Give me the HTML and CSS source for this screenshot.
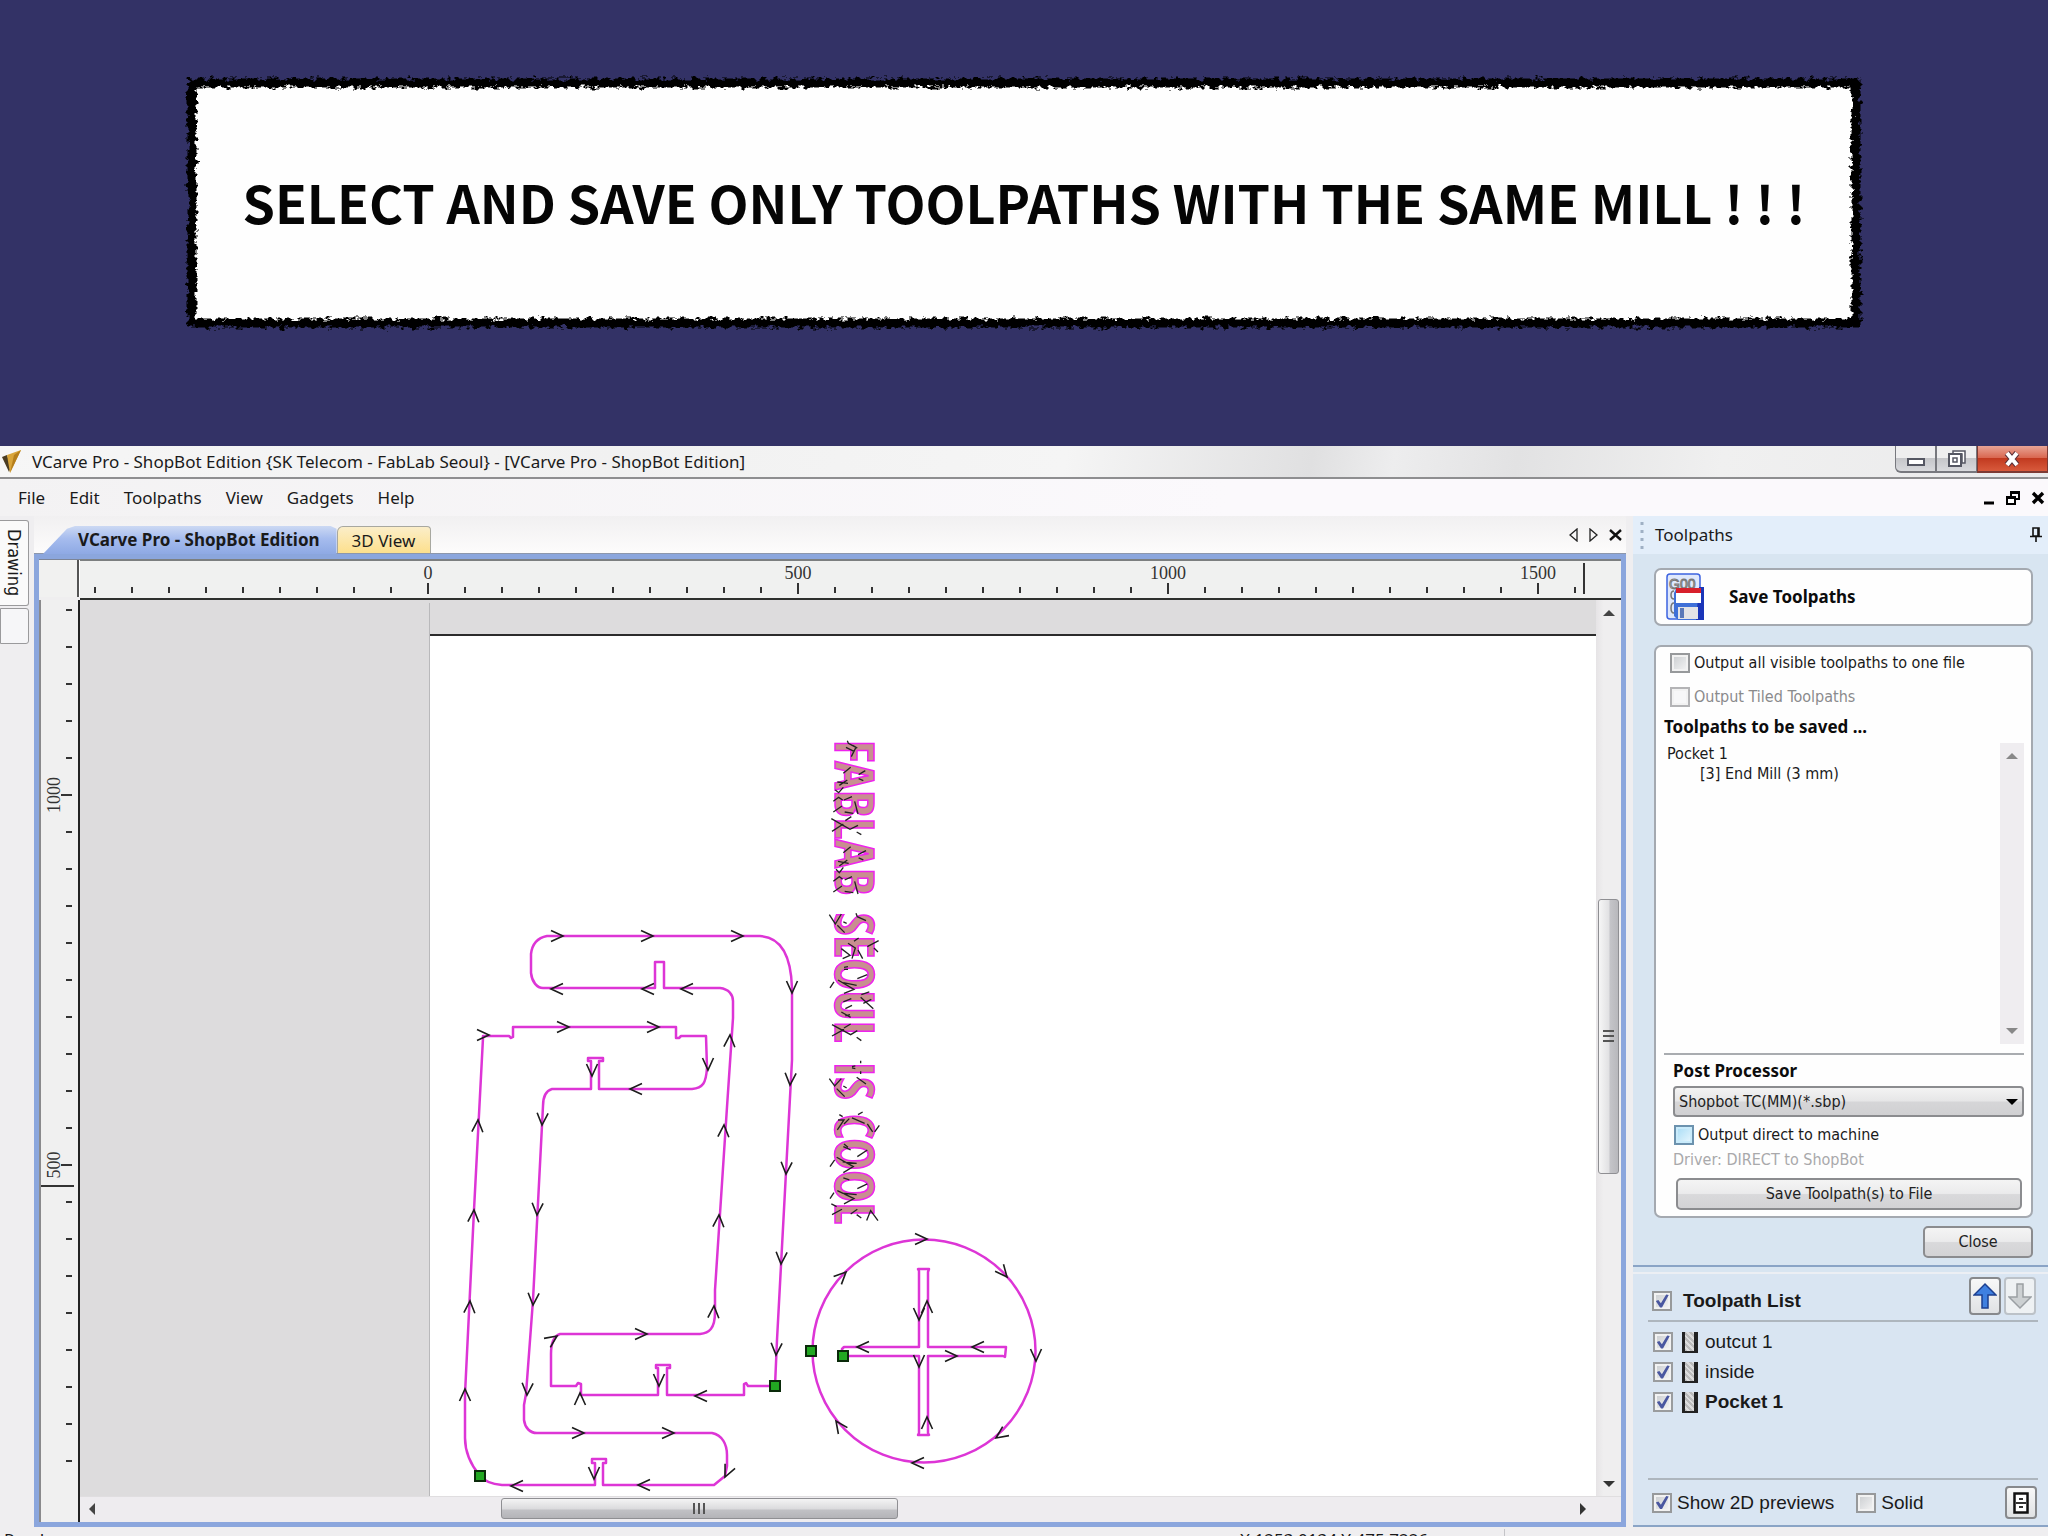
FILE: index.html
```html
<!DOCTYPE html>
<html lang="en">
<head>
<meta charset="utf-8">
<meta name="viewport" content="width=device-width, initial-scale=1">
<title>VCarve Pro - Save Toolpaths</title>
<link rel="stylesheet" href="styles.css">
</head>
<body>
<header class="hero">
  <div class="hero-box">
    <svg class="hero-frame" aria-hidden="true">
      <defs>
        <filter id="rough" filterUnits="userSpaceOnUse" x="-10" y="-10" width="4000" height="400">
          <feTurbulence type="fractalNoise" baseFrequency="0.16 0.22" numOctaves="3" seed="4" result="n"/>
          <feDisplacementMap in="SourceGraphic" in2="n" scale="10" xChannelSelector="R" yChannelSelector="G"/>
        </filter>
      </defs>
      <g filter="url(#rough)">
        <rect class="hero-paper" width="100%" height="100%"/>
        <rect class="hero-stroke" width="100%" height="100%"/>
      </g>
    </svg>
    <h1 class="hero-title">SELECT AND SAVE ONLY TOOLPATHS WITH THE SAME MILL ! ! !</h1>
  </div>
</header>

<main class="app">
  <div class="titlebar">
    <svg class="app-icon" width="20" height="24" viewBox="0 0 20 24" aria-hidden="true">
      <path d="M0 7 5 5 9 17 7 22Z" fill="#4a3c22"/><path d="M5 5 19 0 8 23Z" fill="#d9a53a"/><path d="M12 5 19 0 8 23Z" fill="#b57e1c"/>
    </svg>
    <span class="titlebar-text">VCarve Pro - ShopBot Edition {SK Telecom - FabLab Seoul} - [VCarve Pro - ShopBot Edition]</span>
    <div class="win-buttons">
      <button class="win-btn" aria-label="Minimize"><svg width="20" height="18"><rect x="2" y="9" width="16" height="6" fill="#fff" stroke="#555763" stroke-width="2"/></svg></button>
      <button class="win-btn" aria-label="Restore"><svg width="20" height="20"><path d="M6 2h12v12h-3V5H6z" fill="#fff" stroke="#555763" stroke-width="1.5"/><rect x="2" y="5" width="12" height="12" fill="#fff" stroke="#555763" stroke-width="2"/><rect x="6" y="9" width="4" height="4" fill="#fff" stroke="#555763" stroke-width="1.5"/></svg></button>
      <button class="win-btn win-close" aria-label="Close window"><svg width="20" height="18"><path d="M4 3l10 12M14 3L4 15" stroke="#5c3038" stroke-width="6"/><path d="M4 3l10 12M14 3L4 15" stroke="#fff" stroke-width="4"/></svg></button>
    </div>
  </div>

  <nav class="menubar">
    <button class="menu">File</button><button class="menu">Edit</button><button class="menu">Toolpaths</button><button class="menu">View</button><button class="menu">Gadgets</button><button class="menu">Help</button>
    <div class="mdi">
      <button class="icon-btn" aria-label="Minimize document"><svg width="12" height="14"><path d="M1 12h10" stroke="#000" stroke-width="3"/></svg></button>
      <button class="icon-btn" aria-label="Restore document"><svg width="14" height="14"><path d="M5 5V1h8v7h-3M5 2h8" fill="none" stroke="#000" stroke-width="2"/><path d="M1 6h8v7H1zM1 7h8" fill="#fff" stroke="#000" stroke-width="2"/></svg></button>
      <button class="icon-btn" aria-label="Close document"><svg width="14" height="14"><path d="M2 2l10 10M12 2L2 12" stroke="#000" stroke-width="3.4"/></svg></button>
    </div>
  </nav>

  <div class="workspace">
    <aside class="dock">
      <button class="dock-tab">Drawing</button>
      <div class="dock-empty"></div>
    </aside>

    <section class="document">
      <div class="tabs">
        <button class="tab tab-active">VCarve Pro - ShopBot Edition</button>
        <button class="tab tab-3d">3D View</button>
        <div class="tab-nav">
          <button class="icon-btn" aria-label="Previous tab"><svg width="9" height="14"><path d="M8 1v12L1 7z" fill="none" stroke="#222" stroke-width="1.3"/></svg></button>
          <button class="icon-btn" aria-label="Next tab"><svg width="9" height="14"><path d="M1 1v12l7-6z" fill="none" stroke="#222" stroke-width="1.3"/></svg></button>
          <button class="icon-btn" aria-label="Close tab"><svg width="13" height="14"><path d="M1 2l11 10M12 2L1 12" stroke="#111" stroke-width="2.4"/></svg></button>
        </div>
      </div>

      <div class="frame">
        <div class="corner"></div>
        <div class="ruler-top"><svg width="100%" height="41"><g id="ticks-x" transform="translate(-80 -560)"></g></svg></div>
        <div class="ruler-left"><svg width="41" height="100%"><g id="ticks-y" transform="translate(-39 -600)"></g></svg></div>

        <div class="canvas">
          <svg class="drawing" width="100%" height="100%">
            <defs><path id="chev" d="M-12-5.500L0 0L-12 5.500"/></defs>
            <g transform="translate(-80 -600)">
              <rect x="430" y="635" width="100%" height="100%" fill="#fff"/>
              <path d="M430 635H3000" stroke="#2b2b2b" stroke-width="2"/>
              <path d="M429.500 603V3000" stroke="#b9b9bb"/>
              <g class="cut">
                <path id="hook-a" d="M775 1386L777 1340L792 1060V988C791 955 780 937 760 936H547C537 938 532 945 531 954V973C532 982 537 988 543 988H655V962H664V988H720C729 989 733 995 733 1001V1018L727 1107L715 1290V1312C715 1329 709 1333 700 1334H560C554 1336 551 1344 551 1354V1386H576L578 1383L581 1384V1395H658V1368H656V1365H670V1368H667V1395H744V1384L746 1383L748 1386Z"/>
                <path id="hook-b" d="M480 1476C471 1465 465 1452 465 1438V1394L474 1210L483 1038V1036H509L511 1038L513 1037V1027H676V1038H679L681 1036H706L707 1068C706 1083 703 1088 692 1089H599V1061H603V1058H588V1061H591V1089H552C545 1091 543 1098 543 1106L533 1300L526 1394L524 1405V1420C525 1428 530 1433 537 1433H712C722 1435 727 1444 727 1455V1466L725 1476L714 1485H603V1463H606V1459H592V1463H595V1485H502C492 1484 484 1481 480 1476Z"/>
                <circle cx="924" cy="1351" r="111.500"/>
                <path d="M919 1347V1271L918 1269L929 1269L928 1272V1347H1006L1005 1357L1003 1356H928V1433L929 1435L918 1435L919 1433V1356H842V1349L844 1347Z" fill="#fff"/>
              </g>
              <g id="arrows" class="arrows"></g>
              <g class="marks">
                <rect x="770" y="1381" width="10" height="10"/><rect x="475" y="1471" width="10" height="10"/>
                <rect x="806" y="1346" width="10" height="10"/><rect x="838" y="1351" width="10" height="10"/>
              </g>
              <g class="pocket" transform="translate(835 740) rotate(90)">
                <text x="0" y="0">FABLAB</text><text x="173" y="0">SEOUL</text><text x="321" y="0">IS</text><text x="374" y="0">COOL</text>
              </g>
              <path class="scratch" transform="translate(780 720) scale(.3333)" d="M202 62L205 70L228 82L214 110M198 82L222 94M218 76L232 84M190 160L212 142M236 164L256 152M236 176L250 182M172 186L204 190M178 196L202 180M166 210L176 218L190 202M160 244L176 232L188 240M192 240L216 230M160 276L186 258M224 244L234 282M194 276L220 280M196 302L214 290M154 296L210 328L234 316M156 334L190 312M230 336L244 344M190 398L212 380M234 404L258 392M236 414L250 420M174 424L206 430M178 438L202 420M168 448L178 458L190 442M160 484L178 470L188 478M194 480L216 470M160 516L186 498M224 484L234 522M194 514L220 518M148 584L166 612L184 582M172 616L194 638M190 606L200 610M228 580L232 590L258 602M222 664L236 654M204 670L226 684L216 716M234 690L248 716M184 686L210 706L188 716M262 680L296 662M282 684L294 696M192 742L204 740M192 748L204 748M150 804L162 786M174 780L222 808L192 820M190 788L230 796M232 776L262 764M244 824L268 816M242 832L280 866M250 850L274 838M190 846L214 836M196 866L216 856M184 876L212 892M196 888L210 884M192 924L212 912M156 914L212 944L232 932M156 948L192 928M230 952L244 962M216 1040L226 1038M216 1044L226 1046M242 1022V1030M242 1054V1062M148 1076L164 1098L184 1076M170 1106L194 1130M190 1098L200 1104M230 1072L258 1092M178 1184L188 1190M234 1184L248 1176M174 1200L192 1200L172 1230M192 1212L208 1196M216 1194L254 1210M262 1212L278 1236M284 1236L298 1216M192 1272L204 1282M190 1280L212 1290M150 1340L164 1320M170 1312L220 1340L190 1358M188 1326L230 1330M232 1310L262 1290M190 1374L208 1380M150 1436L162 1418M172 1412L222 1436L192 1452M188 1420L230 1424M232 1406L262 1392M154 1452L170 1460M156 1484L186 1468M212 1482L232 1468M230 1484L244 1494M260 1502L272 1472L294 1502"/>
            </g>
          </svg>
        </div>

        <div class="vscroll">
          <svg class="arr" width="12" height="8"><path d="M0 7L6 1L12 7z" fill="#444"/></svg>
          <div class="vthumb"><svg width="12" height="14"><path d="M0 2h11M0 7h11M0 12h11" stroke="#555" stroke-width="2"/></svg></div>
          <svg class="arr" width="12" height="8"><path d="M0 1L6 7L12 1z" fill="#333"/></svg>
        </div>
        <div class="hscroll">
          <svg class="arr" width="8" height="12"><path d="M7 0L1 6L7 12z" fill="#444"/></svg>
          <div class="hthumb"><svg width="14" height="12"><path d="M2 0v11M7 0v11M12 0v11" stroke="#555" stroke-width="2"/></svg></div>
          <svg class="arr" width="8" height="12"><path d="M1 0L7 6L1 12z" fill="#333"/></svg>
        </div>
      </div>
    </section>

    <aside class="side">
      <div class="side-head">
        <svg width="4" height="30" aria-hidden="true"><path d="M2 2v28" stroke="#9fb0c4" stroke-width="3" stroke-dasharray="3 5"/></svg>
        <span class="side-title">Toolpaths</span>
        <button class="icon-btn" aria-label="Pin panel"><svg width="12" height="16"><path d="M3 1h6v8H3zM0 9.500h12M6 9v6M8 1v8" fill="none" stroke="#111" stroke-width="1.600"/></svg></button>
      </div>

      <div class="side-body">
        <div class="card card-title">
          <svg width="40" height="48" viewBox="0 0 40 48" aria-hidden="true">
            <rect x="1" y="1" width="33" height="45" rx="3" fill="#dfe8fb" stroke="#3d63e0" stroke-width="1.500"/>
            <text x="3" y="16" font-family="Liberation Sans" font-size="14" fill="#fff" stroke="#777" stroke-width="1">G00</text>
            <path d="M8 18c-4 0-4 8 0 8M8 30c-4 0-4 10 0 10" fill="none" stroke="#777" stroke-width="1.500"/>
            <path d="M8 20l2-4h28v31H12l-4-4z" fill="#3f70d8"/><path d="M33 14h5v33h-8z" fill="#1a35b8"/>
            <rect x="10" y="15" width="25" height="5" fill="#d8202c"/><rect x="10" y="20" width="25" height="10" fill="#fff"/>
            <rect x="12" y="34" width="20" height="12" fill="#e3e3e6"/><rect x="14" y="35" width="4" height="10" fill="#5a78b8"/>
          </svg>
          <h2 class="card-heading">Save Toolpaths</h2>
        </div>

        <div class="card card-form">
          <label class="check"><input type="checkbox">Output all visible toolpaths to one file</label>
          <label class="check check-off"><input type="checkbox" disabled>Output Tiled Toolpaths</label>
          <h3 class="label-bold">Toolpaths to be saved ...</h3>
          <div class="saved">
            <ul class="saved-list"><li>Pocket 1<ul><li>[3] End Mill (3 mm)</li></ul></li></ul>
            <div class="saved-scroll"><svg width="12" height="8"><path d="M0 7L6 1L12 7z" fill="#888"/></svg><svg width="12" height="8"><path d="M0 1L6 7L12 1z" fill="#888"/></svg></div>
          </div>
          <div class="post">
            <label class="label-bold label-post" for="pp">Post Processor</label>
            <div class="select-wrap">
              <select id="pp"><option>Shopbot TC(MM)(*.sbp)</option></select>
              <svg class="select-arrow" width="12" height="8"><path d="M0 1L6 7L12 1z" fill="#000"/></svg>
            </div>
            <label class="check check-hot"><input type="checkbox">Output direct to machine</label>
            <p class="driver">Driver: DIRECT to ShopBot</p>
            <button class="btn btn-wide">Save Toolpath(s) to File</button>
          </div>
        </div>
        <button class="btn btn-close">Close</button>
      </div>

      <div class="list-panel">
        <div class="list-head">
          <label class="check check-list list-title"><input type="checkbox" checked>Toolpath List</label>
          <button class="square-btn" aria-label="Move up"><svg width="24" height="30"><path d="M12 3L23 14H15V27H9V14H1z" fill="#3f80e0" stroke="#1c3f90" stroke-width="1.500"/></svg></button>
          <button class="square-btn square-off" aria-label="Move down" disabled><svg width="24" height="30"><path d="M12 27L23 16H15V3H9V16H1z" fill="#ccd0d2" stroke="#9a9fa3" stroke-width="1.500"/></svg></button>
        </div>
        <ul class="items">
          <li><label class="check check-list"><input type="checkbox" checked><span class="mill"></span>outcut 1</label></li>
          <li><label class="check check-list"><input type="checkbox" checked><span class="mill"></span>inside</label></li>
          <li><label class="check check-list item-bold"><input type="checkbox" checked><span class="mill"></span>Pocket 1</label></li>
        </ul>
        <div class="list-foot">
          <label class="check check-foot"><input type="checkbox" checked>Show 2D previews</label>
          <label class="check check-foot"><input type="checkbox">Solid</label>
          <button class="square-btn square-last" aria-label="Machine"><svg width="16" height="22"><rect x="1.500" y="1.500" width="13" height="19" fill="#fff" stroke="#111" stroke-width="2.500"/><path d="M3 11h10M6 7h4M6 15h4" stroke="#333" stroke-width="2"/></svg></button>
        </div>
      </div>
    </aside>
  </div>

  <footer class="status"><span class="status-main">Ready</span><span class="status-pos">X:1253.0134 Y:475.7226</span></footer>
</main>
<script src="draw.js"></script>
</body>
</html>
```
FILE: draw.js
```javascript
// Ruler ticks: one tick every 50 units, 37px apart, a label every 500 units.
var STEP = 37, X0 = 428, Y500 = 1165, sx = '', sy = '', i;
for (i = -9; i <= 31; i++) {
  var x = X0 + i * STEP;
  var major = i >= 0 && i % 10 === 0;
  sx += '<path d="M' + x + ' ' + (major ? 584 : 588) + 'V' + (major ? 595 : 594) + '"/>';
  if (major) sx += '<text x="' + x + '" y="580">' + i * 50 + '</text>';
}
sx += '<path d="M1584 564V595"/>';
for (i = -15; i <= 8; i++) {
  var y = Y500 + i * STEP, big = i % 10 === 0;
  sy += '<path d="M' + (big ? 61 : 66) + ' ' + y + 'H72"/>';
  if (big) sy += '<text transform="translate(60 ' + y + ') rotate(-90)">' + (500 - i * 50) + '</text>';
}
sy += '<path d="M41 1186H74"/>';
document.getElementById('ticks-x').innerHTML = sx;
document.getElementById('ticks-y').innerHTML = sy;

// Cutting direction arrows: tip x, tip y, heading in degrees.
var arrows = [
  [563,936,0],[653,936,0],[743,936,0],[792,993,90],[790,1085,93],[786,1174,93],[781,1264,93],[776,1355,93],
  [551,989,180],[642,989,180],[681,989,180],[730,1035,-87],[724,1125,-87],[719,1215,-87],[714,1306,-87],
  [647,1334,0],[489,1035,0],[569,1027,0],[659,1027,0],[708,1070,90],[630,1089,180],[592,1076,90],
  [542,1125,93],[537,1215,93],[533,1305,93],[527,1395,93],[478,1120,-87],[474,1210,-87],[470,1301,-87],[465,1389,-90],
  [584,1433,0],[674,1433,0],[725,1477,115],[638,1485,180],[511,1486,180],[594,1479,90],[659,1386,90],[695,1396,180],
  [580,1393,-90],[557,1336,-35],
  [927,1239,0],[1007,1277,50],[1036,1361,90],[996,1438,145],[912,1463,180],[836,1421,-125],[846,1272,-45],
  [927,1301,-90],[919,1320,90],[857,1347,180],[972,1347,180],[957,1356,0],[919,1367,90],[927,1417,-90]
];
document.getElementById('arrows').innerHTML = arrows.map(function (a) {
  return '<use href="#chev" transform="translate(' + a[0] + ' ' + a[1] + ') rotate(' + a[2] + ')"/>';
}).join('');
```
FILE: styles.css
```css
* { box-sizing: border-box; }
html, body { margin: 0; }
body {
  display: flex;
  flex-direction: column;
  min-height: 100vh;
  background: #333266;
  font-family: "Noto Sans", "Open Sans", sans-serif;
  font-size: 17px;
  color: #1a1a1a;
}
button { font: inherit; color: inherit; }
ul { list-style: none; margin: 0; padding: 0; }
h1, h2, h3, p { margin: 0; }
svg { display: block; }

/* Banner */
.hero { padding: 83px 192px 123px; }
.hero-box {
  position: relative;
  display: flex;
  align-items: center;
  justify-content: center;
  height: 240px;
  padding-bottom: 2px;
}
.hero-frame { position: absolute; inset: 0; width: 100%; height: 100%; overflow: visible; }
.hero-paper { fill: #fefefe; }
.hero-stroke { fill: none; stroke: #050505; stroke-width: 9px; }
.hero-title {
  position: relative;
  font: 700 52px/80px "Noto Sans CJK SC", sans-serif;
  color: #050505;
  text-align: center;
}

/* Application window */
.app { flex: 1; display: flex; flex-direction: column; background: #efeef0; }
.titlebar {
  display: flex;
  align-items: flex-start;
  height: 33px;
  padding-left: 2px;
  border-bottom: 2px solid #8e8e90;
  background: linear-gradient(100deg, #f6f6f6 0, #f1f1f1 30%, #f5f5f5 52%, #e0e0e1 64%, #ededee 68%, #e2e2e3 74%, #f0f0f0 84%, #eaeaeb 100%);
}
.app-icon { margin-top: 4px; }
.titlebar-text { flex: 1; padding-left: 10px; line-height: 32px; white-space: nowrap; overflow: hidden; }
.win-buttons { display: flex; }
.win-btn {
  display: flex;
  align-items: center;
  justify-content: center;
  width: 41px;
  height: 27px;
  padding: 0;
  border: 1px solid #77787e;
  border-width: 0 1px 2px;
  background: linear-gradient(#eeeeef 50%, #c5c6ca 50%, #d9dadd);
}
.win-btn:first-child { border-bottom-left-radius: 6px; }
.win-close { width: 71px; border-color: #7c3a34; background: linear-gradient(#e8a495, #d9664f 48%, #c23a20 50%, #d85a3c); }

.menubar { display: flex; align-items: center; height: 37px; padding: 0 3px 0 6px; background: linear-gradient(90deg, #f3f2f3, #fbf9fc 60%); }
.menu { padding: 0 12px; border: 0; background: none; line-height: 24px; }
.mdi { display: flex; align-items: center; gap: 11px; margin-left: auto; }
.icon-btn { padding: 0; border: 0; background: none; }

.workspace { flex: 1; display: grid; grid-template-columns: 34px 1fr 415px; min-width: 0; }

/* Collapsed dock */
.dock { display: flex; flex-direction: column; gap: 2px; padding: 4px 5px 0 0; background: #efeef0; }
.dock-tab {
  height: 86px;
  padding: 0;
  border: 1px solid #9a9a9c;
  border-left: 0;
  border-radius: 0 3px 3px 0;
  background: #fafafa;
  font: 18px/26px "DejaVu Sans Condensed", "DejaVu Sans", sans-serif;
  writing-mode: vertical-rl;
}
.dock-empty { height: 36px; border: 1px solid #9a9a9c; border-radius: 0 3px 3px 0; background: #f6f6f8; }

/* Document tabs */
.document { display: flex; flex-direction: column; min-width: 0; margin-right: 7px; }
.tabs { display: flex; align-items: flex-end; height: 38px; padding-left: 9px; background: linear-gradient(#f1f0f1, #fdfcfc); }
.tab { height: 28px; padding: 0; border: 0; line-height: 28px; white-space: nowrap; }
.tab-active {
  padding: 0 17px 0 35px;
  background: linear-gradient(#ccd9f3, #a6bcee 45%, #8ea9e4);
  font-weight: 700;
  clip-path: polygon(0 100%, 24px 10%, 32px 0, 98% 0, 100% 10%, 100% 100%);
}
.tab-3d { padding: 0 15px 0 14px; border: 1px solid #a8a8a0; border-bottom: 0; border-radius: 6px 4px 0 0; background: linear-gradient(#fbeec9, #fddf8a); line-height: 27px; }
.tab-nav { display: flex; align-items: center; gap: 11px; height: 38px; margin-left: auto; padding-right: 4px; }

/* Viewport */
.frame {
  flex: 1;
  display: grid;
  grid-template-columns: 41px 1fr 25px;
  grid-template-rows: 41px 1fr 26px;
  border: 5px solid #8ba6dd;
  box-shadow: inset 0 1px #7c8496, 0 -1px #8d97ab, 0 1px #8a92a4;
  background: #efeeef;
}
.corner { background: #f1f1f0; border-right: 2px solid #555; margin: 1px 1px 3px 0; box-shadow: 1px 0 #fff; }
.ruler-top { grid-column: 2 / 4; border-top: 2px solid #7c7f80; border-bottom: 2px solid #2e302e; background: #f0f1f0; overflow: hidden; }
.ruler-top svg { margin-top: -2px; }
.ruler-left { grid-row: 2 / 4; border-left: 2px solid #8a8a8c; border-right: 2px solid #222; background: #f0f0f0; overflow: hidden; }
.ruler-left svg { margin-left: -2px; }
#ticks-x path, #ticks-y path { stroke: #333; stroke-width: 2px; }
#ticks-x text, #ticks-y text { font: 18px "Liberation Serif", serif; fill: #333; text-anchor: middle; }
.canvas { position: relative; min-height: 893px; background: #dddcdd; overflow: hidden; }
.drawing { position: absolute; inset: 0; }
.cut { fill: none; stroke: #dd35d6; stroke-width: 2.500px; stroke-linejoin: round; }
.arrows { fill: none; stroke: #1c1c1c; stroke-width: 1.600px; }
.marks { fill: #22a822; stroke: #0a2a0a; stroke-width: 2px; }
.pocket text { font: 700 54px "Open Sans Condensed", "Open Sans", sans-serif; fill: #c88f90; stroke: #ee22ee; stroke-width: 1.500px; }
.scratch { fill: none; stroke: #222; stroke-width: 4px; }

.vscroll { display: grid; grid-template-rows: 8px 281fr 274fr 305fr 8px; justify-items: center; padding: 9px 1px 8px; background: linear-gradient(90deg, #e6e4e6, #efeeef 30%); }
.vscroll .arr:last-child { grid-row: 5; }
.vthumb {
  grid-row: 3;
  display: flex;
  align-items: center;
  justify-content: center;
  width: 21px;
  border: 1px solid #8f8f93;
  border-radius: 3px;
  background: linear-gradient(90deg, #f6f6f6, #e2e2e4 50%, #c4c4c8 60%, #b8b8bc);
}
.hscroll { grid-column: 2 / 4; display: flex; align-items: center; padding: 0 34px 2px 8px; border-top: 1px solid #e0dee0; background: #eeecef; }
.hthumb {
  display: flex;
  align-items: center;
  justify-content: center;
  height: 21px;
  width: 26.500%;
  margin: 0 auto 0 27%;
  border: 1px solid #8f8f93;
  border-radius: 3px;
  background: linear-gradient(#f4f4f4, #dcdcde 50%, #c0c0c4 60%, #b4b4b8);
}

/* Toolpaths panel */
.side { display: flex; flex-direction: column; background: #d8e5f1; font: 16px/20px "DejaVu Sans Condensed", "DejaVu Sans", sans-serif; }
.side-head { display: flex; align-items: center; gap: 11px; height: 38px; padding: 0 6px 0 7px; background: #e3eefa; font: 17px/24px "Noto Sans", sans-serif; }
.side-title { flex: 1; }
.side-body { display: flex; flex-direction: column; padding: 14px 15px 7px 21px; border-bottom: 2px solid #8aa4c6; }
.card { border: 2px solid #a4a9b0; border-radius: 7px; background: #fefefe; }
.card-title { display: flex; align-items: center; gap: 23px; height: 58px; margin-bottom: 19px; padding: 0 10px; }
.card-heading, .label-bold { font: 700 17px/24px "Noto Sans", sans-serif; color: #0c0c0c; }
.card-form { display: flex; flex-direction: column; padding: 6px 7px 6px 8px; }
.check { display: flex; align-items: center; gap: 4px; white-space: nowrap; }
.check input {
  appearance: none;
  flex: none;
  display: grid;
  place-items: center;
  width: 20px;
  height: 20px;
  margin: 0;
  border: 2px solid #97999b;
  background: linear-gradient(135deg, #c9cccf, #f6f6f6);
  box-shadow: inset 0 0 0 2px #f2f2f2;
}
.check input:checked::before {
  content: "";
  width: 14px;
  height: 14px;
  background: #4a57a0;
  clip-path: polygon(6% 50%, 24% 42%, 42% 66%, 80% 4%, 98% 8%, 50% 96%, 36% 96%);
}
.card-form > .check { height: 20px; padding-left: 6px; }
.card-form > .check-off { margin-top: 14px; color: #8a8a8c; }
.check-off input { border-color: #b4b4b6; background: #f7f7f8; }
.card-form h3 { margin: 8px 0 4px; }
.saved { display: flex; justify-content: space-between; height: 301px; }
.saved-list { padding: 1px 0 0 3px; line-height: 20px; }
.saved-list ul { padding-left: 33px; }
.saved-scroll { display: flex; flex-direction: column; justify-content: space-between; align-items: center; width: 24px; padding: 9px 0; background: #efedf0; }
.post { margin-top: 9px; padding: 4px 0 0 9px; border-top: 2px solid #a9acb0; }
.label-post { display: block; margin-bottom: 3px; }
.select-wrap { position: relative; }
.select-wrap select {
  appearance: none;
  display: block;
  width: 100%;
  height: 31px;
  padding: 0 4px;
  border: 2px solid #8b8c8f;
  border-radius: 4px;
  background: linear-gradient(#f3f3f3, #e6e6e7 48%, #d6d6d8 52%, #d0d0d2);
  font: inherit;
  color: #222;
}
.select-arrow { position: absolute; right: 6px; top: 12px; }
.check-hot { margin-top: 8px; height: 20px; padding-left: 1px; }
.check-hot input { border-color: #6c92ae; background: linear-gradient(135deg, #a6dbf5, #eaf8fe); box-shadow: inset 0 0 0 2px #c9ebfb; }
.driver { margin: 5px 0 8px; line-height: 20px; color: #a9a9ab; }
.btn {
  height: 32px;
  padding: 0 24px;
  border: 2px solid #8b8c8f;
  border-radius: 5px;
  background: linear-gradient(#f4f4f4, #ebebec 48%, #d9d9db 52%, #d3d3d5);
  color: #222;
}
.btn-wide { display: block; width: calc(100% - 5px); margin-left: 3px; }
.btn-close { align-self: flex-end; width: 110px; margin-top: 8px; }

.list-panel { flex: 1; display: flex; flex-direction: column; margin-top: 5px; padding: 3px 10px 5px 15px; border-top: 2px solid #eceff4; border-bottom: 2px solid #8aa4c6; background: #d9e5f2; font: 19px/24px "Liberation Sans", Arial, sans-serif; }
.list-head { display: flex; align-items: flex-start; gap: 3px; height: 45px; padding: 0 2px 0 4px; border-bottom: 2px solid #aeb6be; }
.list-title { flex: 1; height: 48px; font-weight: 700; }
.list-title.check { gap: 11px; }
.square-btn { display: flex; align-items: center; justify-content: center; width: 32px; height: 38px; padding: 0; border: 2px solid #87898c; border-radius: 4px; background: linear-gradient(#f8f8f8, #e0e2e4); }
.square-off { border-color: #bcc2c8; background: #eef1f3; }
.items { padding: 5px 0 0 5px; }
.items li { height: 30px; padding-top: 3px; }
.check-list { gap: 9px; }
.items input { border-color: #9a9c9e; }
.mill { width: 16px; height: 21px; border: solid #222; border-width: 0 4px 2px 3px; background: repeating-linear-gradient(45deg, #bbb 0 2px, #ddd 2px 4px); }
.items .mill { margin-right: -2px; }
.item-bold { font-weight: 700; }
.list-foot { display: flex; align-items: center; gap: 22px; margin-top: auto; padding: 6px 1px 1px 4px; border-top: 2px solid #aeb6be; }
.check-foot { gap: 5px; }
.square-last { height: 33px; margin-left: auto; }

.status { display: flex; height: 9px; padding: 2px 4px 0; overflow: hidden; background: #efeef0; font-size: 17px; line-height: 22px; }
.status-main { width: 1236px; }
.status-pos { padding-right: 76px; border-right: 1px solid #c4c4c8; }
```
